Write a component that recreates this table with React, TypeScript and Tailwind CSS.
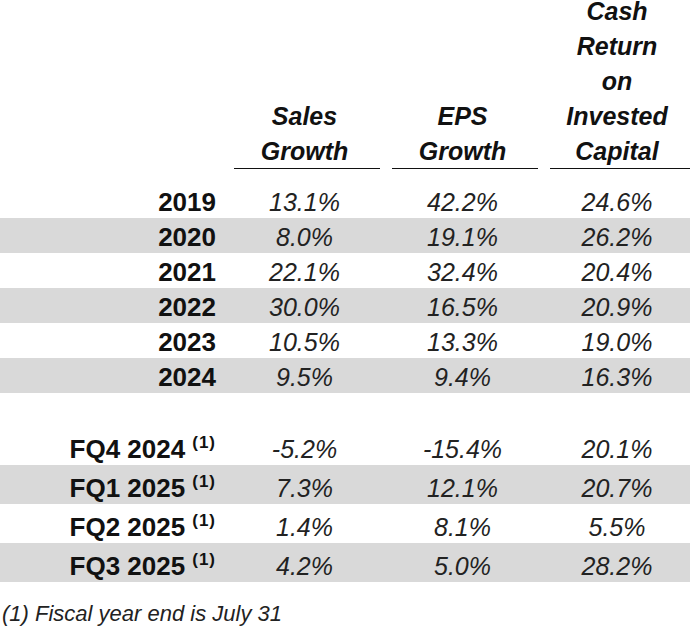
const years = [
  ["2019", "13.1%", "42.2%", "24.6%"],
  ["2020", "8.0%", "19.1%", "26.2%"],
  ["2021", "22.1%", "32.4%", "20.4%"],
  ["2022", "30.0%", "16.5%", "20.9%"],
  ["2023", "10.5%", "13.3%", "19.0%"],
  ["2024", "9.5%", "9.4%", "16.3%"],
];

const quarters = [
  ["FQ4 2024", "-5.2%", "-15.4%", "20.1%"],
  ["FQ1 2025", "7.3%", "12.1%", "20.7%"],
  ["FQ2 2025", "1.4%", "8.1%", "5.5%"],
  ["FQ3 2025", "4.2%", "5.0%", "28.2%"],
];

const cols = "grid grid-cols-[228px_158px_158px_146px]";

const Row = ({ cells, shaded, tall, note }: { cells: string[]; shaded: boolean; tall?: boolean; note?: boolean }) => (
  <div className={`${cols} items-end pb-[1px] ${tall ? "h-[39px]" : "h-[35px]"} ${shaded ? "bg-[#d9d9d9]" : ""}`}>
    <div className="pr-[12px] text-right text-[26px] leading-[30px] font-bold text-[#111]">
      {cells[0]}
      {note && <span className="ml-[7px] text-[17px] tracking-[1px] align-[10px]">(1)</span>}
    </div>
    <div className="pr-[5px] text-center text-[25px] leading-[30px] italic text-[#222]">{cells[1]}</div>
    <div className="pr-[5px] text-center text-[25px] leading-[30px] italic text-[#222]">{cells[2]}</div>
    <div className="text-center text-[25px] leading-[30px] italic text-[#222]">{cells[3]}</div>
  </div>
);

export default function App() {
  return (
    <div className="w-[690px] h-[628px] overflow-hidden bg-white font-['Liberation_Sans',Arial,sans-serif]">
      {/* header */}
      <div className={`${cols} items-end -mt-[6px] text-[25px] leading-[35px] font-bold italic text-[#111]`}>
        <div />
        <div className="flex flex-col">
          <div className="pr-[5px] text-center">Sales<br />Growth</div>
          <div className="mx-[6px] -mt-[1.5px] h-[1.5px] bg-[#111]" />
        </div>
        <div className="flex flex-col">
          <div className="pr-[5px] text-center">EPS<br />Growth</div>
          <div className="mx-[6px] -mt-[1.5px] h-[1.5px] bg-[#111]" />
        </div>
        <div className="flex flex-col">
          <div className="text-center">Cash<br />Return<br />on<br />Invested<br />Capital</div>
          <div className="ml-[6px] -mt-[1.5px] h-[1.5px] bg-[#111]" />
        </div>
      </div>

      <div className="mt-[14px]">
        {years.map((r, i) => (
          <Row key={r[0]} cells={r} shaded={i % 2 === 1} />
        ))}
      </div>

      <div className="mt-[33px]">
        {quarters.map((r, i) => (
          <Row key={r[0]} cells={r} shaded={i % 2 === 1} tall note />
        ))}
      </div>

      <p className="mt-[19px] pl-[2px] text-[22px] leading-[26px] italic text-[#222]">(1) Fiscal year end is July 31</p>
    </div>
  );
}
